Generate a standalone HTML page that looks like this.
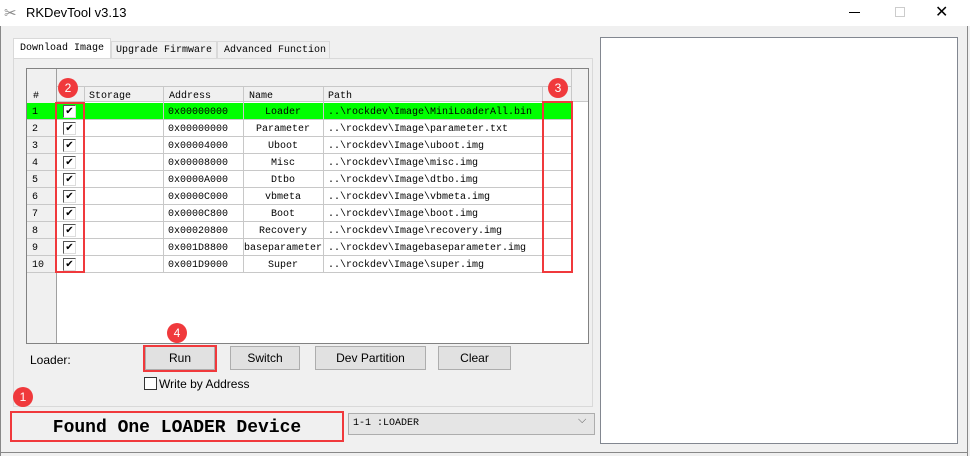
<!DOCTYPE html>
<html><head><style>
*{box-sizing:border-box;margin:0;padding:0}
body{width:970px;height:456px;background:#f0f0f0;position:relative;overflow:hidden;font-family:"Liberation Sans",sans-serif}
.a{position:absolute}
.mono{font-family:"Liberation Mono",monospace;font-size:10px;color:#000}
.btn{position:absolute;background:#e1e1e1;border:1px solid #adadad;font-size:12px;text-align:center;line-height:22px;height:24px;top:346px}
.red{position:absolute;border:2px solid #f0393c}
.dot{position:absolute;width:20px;height:20px;border-radius:50%;background:#f0393c;color:#fff;font-size:12px;text-align:center;line-height:20px}
.cell{position:absolute;height:17px;line-height:19px;white-space:nowrap;overflow:hidden}
.cb{position:absolute;width:13px;height:13px;border:1px solid #555;border-right-color:#ddd;border-bottom-color:#ddd;background:#fff;font-size:10px;line-height:12px;text-align:center}
</style></head><body>
<div class="a" style="left:0;top:0;width:970px;height:26px;background:#fff"></div>
<div class="a" style="left:4px;top:4px;font-size:15px;color:#888">✂</div>
<div class="a" style="left:26px;top:5px;font-size:13px;color:#000">RKDevTool v3.13</div>
<div class="a" style="left:849px;top:12px;width:11px;height:1px;background:#000"></div>
<div class="a" style="left:895px;top:7px;width:10px;height:10px;border:1px solid #ccc"></div>
<div class="a" style="left:935px;top:2px;font-size:16px;color:#000">✕</div>
<div class="a" style="left:0;top:26px;width:1px;height:430px;background:#888"></div>
<div class="a" style="left:967px;top:26px;width:1px;height:430px;background:#888"></div>
<div class="a" style="left:0;top:452px;width:968px;height:1px;background:#888"></div>

<div class="a mono" style="left:13px;top:38px;width:98px;height:21px;background:#fff;border:1px solid #d9d9d9;border-bottom:none;padding:4px 0 0 6px">Download Image</div>
<div class="a mono" style="left:111px;top:41px;width:106px;height:17px;border:1px solid #d9d9d9;border-bottom:none;padding:3px 0 0 4px">Upgrade Firmware</div>
<div class="a mono" style="left:217px;top:41px;width:113px;height:17px;border:1px solid #d9d9d9;border-bottom:none;padding:3px 0 0 6px">Advanced Function</div>
<div class="a" style="left:13px;top:58px;width:580px;height:349px;background:#fff;border:1px solid #d9d9d9"></div>
<div class="a" style="left:14px;top:59px;width:578px;height:347px;background:#f0f0f0"></div>

<div class="a" style="left:26px;top:68px;width:563px;height:276px;background:#fff;border:1px solid #828282"></div>
<div class="a" style="left:27px;top:69px;width:561px;height:33px;background:#f0f0f0;border-bottom:1px solid #c8c8c8"></div>
<div class="a" style="left:27px;top:86px;width:545px;height:1px;background:#c8c8c8"></div>
<div class="a" style="left:27px;top:69px;width:30px;height:274px;background:#f0f0f0;border-right:1px solid #a0a0a0"></div>
<div class="a" style="left:571px;top:69px;width:1px;height:33px;background:#c8c8c8"></div>
<div id="rows"></div>
<div class="a mono" style="left:33px;top:91px">#</div>
<div class="a mono" style="left:89px;top:91px">Storage</div>
<div class="a mono" style="left:169px;top:91px">Address</div>
<div class="a mono" style="left:249px;top:91px">Name</div>
<div class="a mono" style="left:328px;top:91px">Path</div>
<script>
var names=["Loader","Parameter","Uboot","Misc","Dtbo","vbmeta","Boot","Recovery","baseparameter","Super"];
var addr=["0x00000000","0x00000000","0x00004000","0x00008000","0x0000A000","0x0000C000","0x0000C800","0x00020800","0x001D8800","0x001D9000"];
var path=["MiniLoaderAll.bin","parameter.txt","uboot.img","misc.img","dtbo.img","vbmeta.img","boot.img","recovery.img","baseparameter.img","super.img"];
var h="";
var cols=[57,84,163,243,323,542,571];
for(var i=0;i<10;i++){var y=103+i*17;
if(i==0)h+='<div class="a" style="left:27px;top:103px;width:545px;height:16px;background:#00ff00"></div>';
h+='<div class="a" style="left:27px;top:'+(y+16)+'px;width:545px;height:1px;background:#c8c8c8"></div>';
h+='<div class="cell mono" style="left:32px;top:'+y+'px">'+(i+1)+'</div>';
h+='<div class="cb" style="left:63px;top:'+(y+2)+'px">✔</div>';
h+='<div class="cell mono" style="left:168px;top:'+y+'px">'+addr[i]+'</div>';
h+='<div class="cell mono" style="left:243px;top:'+y+'px;width:80px;text-align:center">'+names[i]+'</div>';
h+='<div class="cell mono" style="left:328px;top:'+y+'px">..\\rockdev\\Image'+(i==8?'':'\\')+path[i]+'</div>';}
for(var c=1;c<cols.length;c++){h+='<div class="a" style="left:'+cols[c]+'px;top:87px;width:1px;height:185px;background:#c8c8c8"></div>';}
document.getElementById("rows").innerHTML=h;
</script>

<div class="a" style="left:30px;top:353px;font-size:12px">Loader:</div>
<div class="btn" style="left:145px;width:70px">Run</div>
<div class="btn" style="left:230px;width:70px">Switch</div>
<div class="btn" style="left:315px;width:111px">Dev Partition</div>
<div class="btn" style="left:438px;width:73px">Clear</div>
<div class="a" style="left:144px;top:377px;width:13px;height:13px;border:1px solid #333;background:#fff"></div>
<div class="a" style="left:159px;top:377px;font-size:12px">Write by Address</div>

<div class="a" style="left:11px;top:412px;width:332px;height:30px;background:#f0f0f0"></div>
<div class="a" style="left:11px;top:418px;width:332px;text-align:center;font-family:'Liberation Mono',monospace;font-weight:bold;font-size:18px">Found One LOADER Device</div>
<div class="a" style="left:348px;top:413px;width:247px;height:22px;background:#e5e5e5;border:1px solid #adadad"></div>
<div class="a mono" style="left:353px;top:418px">1-1 :LOADER</div>
<div class="a" style="left:578px;top:414px;font-size:11px;color:#555">⌵</div>

<div class="a" style="left:600px;top:37px;width:358px;height:407px;background:#fff;border:1px solid #828790"></div>

<div class="red" style="left:55px;top:102px;width:30px;height:171px"></div>
<div class="red" style="left:542px;top:101px;width:31px;height:172px"></div>
<div class="red" style="left:143px;top:345px;width:74px;height:27px"></div>
<div class="red" style="left:10px;top:411px;width:334px;height:31px"></div>
<div class="dot" style="left:58px;top:78px">2</div>
<div class="dot" style="left:548px;top:78px">3</div>
<div class="dot" style="left:167px;top:323px">4</div>
<div class="dot" style="left:13px;top:387px">1</div>
</body></html>
